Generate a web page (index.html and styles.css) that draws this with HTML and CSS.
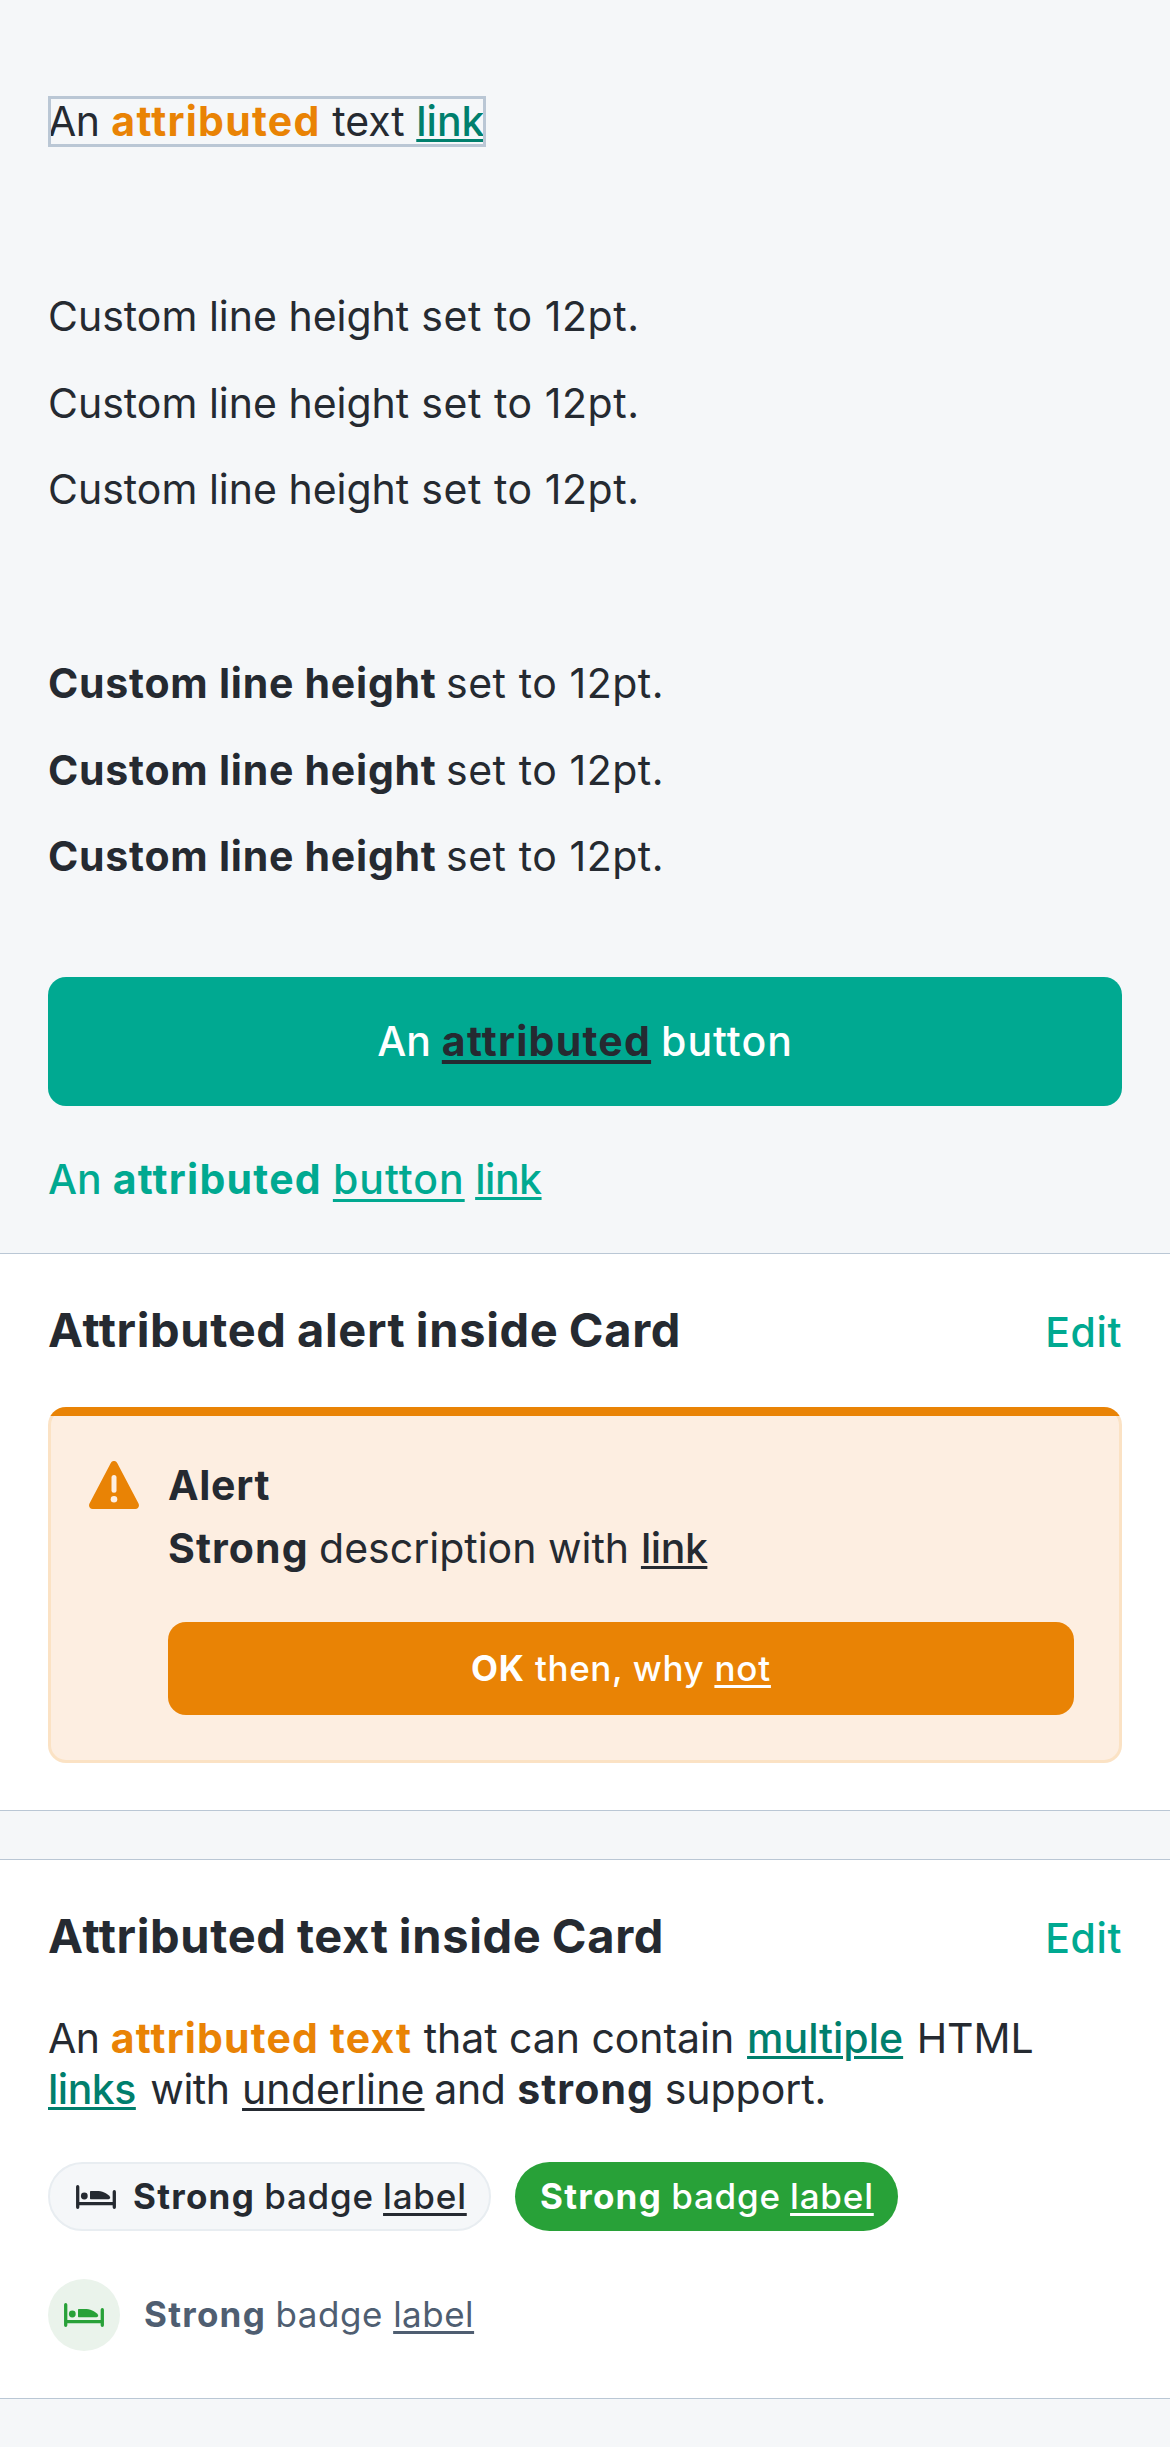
FILE: index.html
```html
<!DOCTYPE html>
<html lang="en">
<head>
<meta charset="utf-8">
<title>Attributed text</title>
<link rel="stylesheet" href="styles.css">
</head>
<body>
<svg class="sprite" width="0" height="0">
  <symbol id="bed" viewBox="0 0 40 24">
    <path d="M1.700 1.700v20.600M38.300 6.700v15.600" fill="none" stroke="currentColor" stroke-width="3.300" stroke-linecap="round"/>
    <path d="M1.700 18.600h36.600" fill="none" stroke="currentColor" stroke-width="3.300"/>
    <circle cx="8.300" cy="11" r="3.400" fill="currentColor"/>
    <path d="M14 7c0-.6.4-1 1-1h5.500c5.500 0 10.500 2 13.300 5.600.9 1.200.3 2.600-1.200 2.600H15c-.6 0-1-.4-1-1z" fill="currentColor"/>
  </symbol>
</svg>

<main class="page">
  <p class="boxed"><span class="an">An</span> <b class="orange wide">attributed</b> <span>text</span> <a class="link">link</a></p>

  <section class="lines regular">
    <p>Custom line height <span class="set">set to 12pt.</span></p>
    <p>Custom line height <span class="set">set to 12pt.</span></p>
    <p>Custom line height <span class="set">set to 12pt.</span></p>
  </section>
  <section class="lines strong">
    <p><b>Custom line height</b> <span class="set">set to 12pt.</span></p>
    <p><b>Custom line height</b> <span class="set">set to 12pt.</span></p>
    <p><b>Custom line height</b> <span class="set">set to 12pt.</span></p>
  </section>

  <div class="button"><p>An <b class="dark wide">attributed</b> <span class="btn-word">button</span></p></div>
  <p class="button-link">An <b class="wide">attributed</b> <u class="btn-word">button</u> <u class="tight">link</u></p>

  <section class="card first">
    <header><h2>Attributed alert inside Card</h2><a class="edit">Edit</a></header>
    <div class="alert">
      <svg class="warn" viewBox="0 0 50 48"><path d="M21.800 2C23.200-.7 26.800-.7 28.200 2L49.500 42.600C50.800 45.200 49.200 48 46.300 48H3.700C.8 48-.8 45.200.5 42.600z" fill="currentColor"/><path d="M25 16.500v12.700" stroke="#fdeee1" stroke-width="5" stroke-linecap="round"/><circle cx="25" cy="38.300" r="3.300" fill="#fdeee1"/></svg>
      <div class="alert-body">
        <p class="alert-title"><b>Alert</b></p>
        <p class="alert-text"><b class="strong-word">Strong</b> <span class="description">description with</span> <u class="tight">link</u></p>
        <div class="small-button"><p><b>OK</b> <span class="then">then, why</span> <u>not</u></p></div>
      </div>
    </div>
  </section>

  <section class="card second">
    <header><h2>Attributed text inside Card</h2><a class="edit">Edit</a></header>
    <p class="para"><span class="an">An</span> <b class="orange phrase">attributed text</b> <span>that can contain</span> <a class="link multiple">multiple</a> <span class="html">HTML</span><br><a class="link links">links</a> <span class="with">with</span> <u>underline</u> <span class="and">and</span> <b class="strong-word">strong</b> <span class="support">support.</span></p>
    <div class="badges">
      <div class="badge neutral"><svg class="bed"><use href="#bed"/></svg><p><b>Strong</b> <span>badge</span> <u>label</u></p></div>
      <div class="badge success"><p><b>Strong</b> <span>badge</span> <u>label</u></p></div>
    </div>
    <div class="badge-list"><span class="disc"><svg class="bed"><use href="#bed"/></svg></span><p><b>Strong</b> <span>badge</span> <u>label</u></p></div>
  </section>
</main>
</body>
</html>
```

FILE: styles.css
```css
* { box-sizing: border-box; }
body, p, h2 { margin: 0; }
body {
  background: #f5f7f9;
  color: #252a31;
  font: 400 41px/51px Inter, "Liberation Sans", sans-serif;
}
p { white-space: nowrap; }
b { font-weight: 700; }
u, .link, .dark {
  text-decoration: underline;
  text-decoration-thickness: 3px;
  text-underline-offset: 4px;
}
.sprite { position: absolute; }
.page { height: 2447px; padding-top: 96px; }

/* Inline text styles */
.orange { color: #e98305; }
.wide { letter-spacing: 1.25px; }
.phrase { letter-spacing: 1.15px; }
.an { letter-spacing: -0.6px; }
.tight { font-weight: 500; letter-spacing: -0.45px; text-underline-offset: 3px; }
.set { letter-spacing: 0.55px; }
.btn-word { letter-spacing: 1px; text-underline-offset: 5px; }
.strong-word { letter-spacing: 1.1px; }
.link { color: #007f6d; font-weight: 500; text-underline-offset: 3px; }
.dark { color: #252a31; text-decoration-thickness: 4px; }

.boxed {
  position: relative;
  width: 438px;
  height: 51px;
  margin-left: 48px;
}
.boxed .orange { margin-left: 0.5px; }
.boxed::after {
  content: "";
  position: absolute;
  inset: 0;
  border: 3px solid #bac7d5;
}
.lines { height: 259px; margin: 126px 48px 0; }
.lines p { line-height: 87px; }
.lines p:last-child { line-height: 85px; }
.lines.strong { margin-top: 108px; }
.lines b { letter-spacing: 0.75px; }
.lines.strong .set { margin-left: -2.2px; }
.lines.regular .set { margin-left: 0.5px; }

.button {
  display: flex;
  align-items: center;
  justify-content: center;
  height: 129px;
  margin: 78px 48px 0;
  border-radius: 18px;
  background: #00a991;
  color: #fff;
  font-weight: 500;
}
.button .btn-word { margin-left: -1px; }
.button-link { margin: 48px 48px 0; color: #00a991; font-weight: 500; }
.button-link .tight { margin-left: -0.5px; }

.card {
  padding: 47px 48px 48px;
  background: #fff;
  border-top: 1px solid #bac7d5;
  border-bottom: 1px solid #bac7d5;
}
.first { margin-top: 48px; height: 558px; }
.second { margin-top: 48px; height: 540px; }
header { display: flex; justify-content: space-between; align-items: baseline; height: 57px; }
h2 { font-size: 47px; line-height: 58px; font-weight: 700; letter-spacing: 0.65px; word-spacing: -1.4px; }
.edit { color: #00a991; font-weight: 500; letter-spacing: 0.6px; }

.alert {
  display: flex;
  height: 356px;
  margin-top: 49px;
  padding: 50px 45px 45px 38px;
  border: 3px solid transparent;
  border-radius: 18px;
  background:
    linear-gradient(#e98305 9px, transparent 9px) border-box,
    linear-gradient(#fdeee1, #fdeee1) padding-box,
    linear-gradient(#fbe2c4, #fbe2c4) border-box;
}
.warn { width: 50px; height: 48px; margin: 1px 29px 0 0; color: #e98305; }
.alert-body { flex: 1; }
.alert-title { letter-spacing: 0.7px; }
.alert-text { margin-top: 12px; }
.description { margin-left: -1.2px; }
.alert-text .tight { margin-left: 0.3px; }
.small-button {
  display: flex;
  align-items: center;
  justify-content: center;
  height: 93px;
  margin-top: 48px;
  border-radius: 18px;
  background: #e98305;
  color: #fff;
  font-size: 35px;
  font-weight: 500;
  letter-spacing: 0.8px;
}
.then { letter-spacing: 0.6px; }

.para { margin-top: 49px; }
.para span { letter-spacing: -0.05px; }
.para .an { letter-spacing: -0.6px; }
.para .multiple { margin-left: 1.4px; }
.para .html { margin-left: 2px; }
.para .links { letter-spacing: -0.5px; }
.para .with { margin-left: 3px; letter-spacing: -0.5px; }
.para u { margin-left: 1px; letter-spacing: 0.1px; }
.para .and { margin-left: -1.8px; letter-spacing: -0.3px; }
.para .support { margin-left: -0.8px; }

.badges { display: flex; gap: 24px; margin-top: 47px; font-size: 35px; font-weight: 500; letter-spacing: 0.8px; }
.badge { display: flex; align-items: center; height: 69px; border-radius: 35px; }
.badge b, .badge-list b { letter-spacing: 1.25px; }
.badge span, .badge u { margin-left: -1px; }
.neutral { width: 443px; padding-left: 26px; background: #f5f7f9; border: 2px solid #e8edf1; }
.neutral .bed { margin-right: 17px; }
.success { width: 383px; padding-left: 25px; background: #28a138; color: #fff; }
.bed { display: block; width: 40px; height: 24px; }
.badge-list { display: flex; align-items: center; gap: 24px; margin-top: 48px; font-size: 35px; letter-spacing: 0.5px; color: #4f5e71; }
.badge-list p { line-height: 49px; padding-bottom: 2px; }
.badge-list p span { margin-left: -0.8px; }
.disc {
  display: flex;
  align-items: center;
  justify-content: center;
  width: 72px;
  height: 72px;
  border-radius: 50%;
  background: #eaf3eb;
  color: #28a138;
}
```
